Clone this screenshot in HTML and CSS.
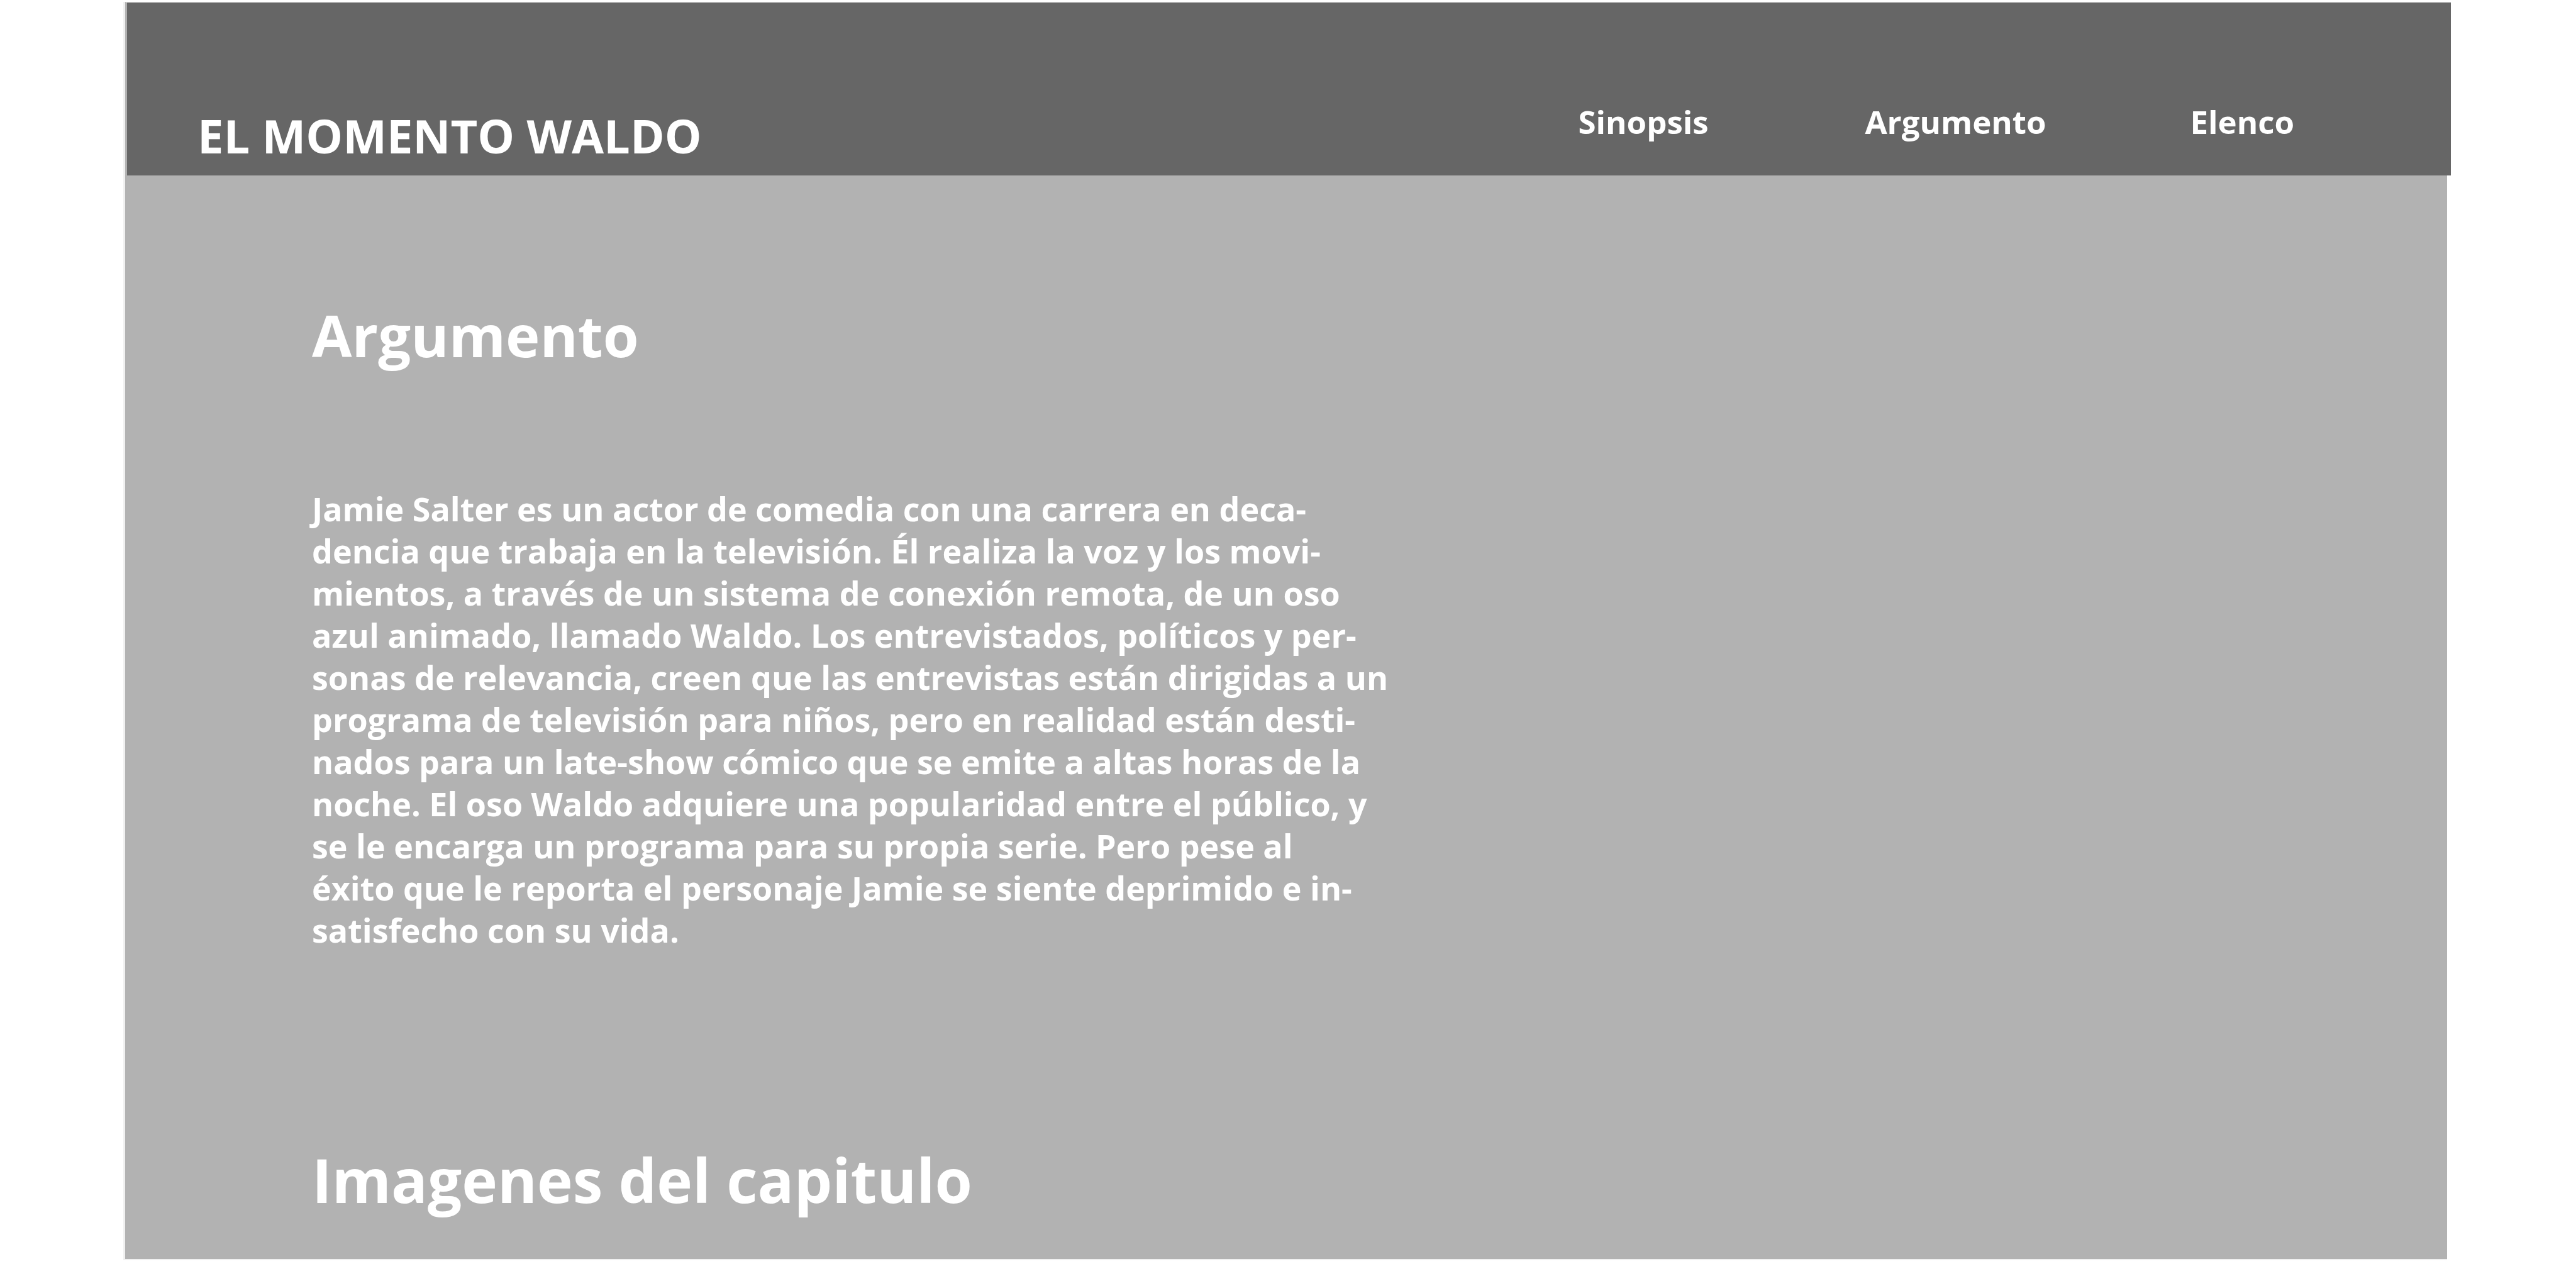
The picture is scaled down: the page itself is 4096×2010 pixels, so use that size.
FILE: index.html
```html
<!DOCTYPE html>
<html lang="es">
<head>
<meta charset="utf-8">
<title>El momento Waldo</title>
<link rel="stylesheet" href="styles.css">
</head>
<body>
<header class="site-header">
  <div class="logo">EL MOMENTO WALDO</div>
  <nav class="menu">
    <a href="#sinopsis">Sinopsis</a>
    <a href="#argumento">Argumento</a>
    <a href="#elenco">Elenco</a>
  </nav>
</header>
<main class="content">
  <h1 class="title" id="argumento">Argumento</h1>
  <p class="story">Jamie Salter es un actor de comedia con una carrera en deca-<br>
dencia que trabaja en la televisión. Él realiza la voz y los movi-<br>
mientos, a través de un sistema de conexión remota, de un oso<br>
azul animado, llamado Waldo. Los entrevistados, políticos y per-<br>
sonas de relevancia, creen que las entrevistas están dirigidas a un<br>
programa de televisión para niños, pero en realidad están desti-<br>
nados para un late-show cómico que se emite a altas horas de la<br>
noche. El oso Waldo adquiere una popularidad entre el público, y<br>
se le encarga un programa para su propia serie. Pero pese al<br>
éxito que le reporta el personaje Jamie se siente deprimido e in-<br>
satisfecho con su vida.</p>
  <h2 class="subtitle">Imagenes del capitulo</h2>
</main>
</body>
</html>
```
FILE: styles.css
```css
* {
  box-sizing: border-box;
}

body {
  display: flex;
  flex-direction: column;
  min-height: 100vh;
  margin: 0;
  padding: 3px 199px 6px 196px;
  background: #fff;
  color: #fff;
  font-family: "Open Sans", sans-serif;
  font-weight: 700;
}

.site-header {
  display: flex;
  align-items: flex-end;
  justify-content: space-between;
  padding: 156px 249px 21px 112px;
  border-top: 1px solid #f0f0f0;
  /* the page's light edge, then a strip of its grey, beside the bar */
  border-left: 3px solid #b2b2b2;
  margin-left: 3px;
  box-shadow: -3px 0 #f0f0f0;
  background: #666;
}

.logo {
  font-size: 74px;
  line-height: 84px;
}

.menu {
  display: grid;
  grid-template-columns: 456px 517px auto;
  padding-bottom: 31px;
  font-size: 51px;
  line-height: 67px;
}

.menu a {
  color: inherit;
  text-decoration: none;
}

.content {
  flex: 1;
  margin-right: 6px;
  padding: 199px 297px 70px;
  border: solid #f0f0f0;
  border-width: 0 0 2px 3px;
  background: #b2b2b2;
}

.title,
.subtitle {
  margin: 0;
  line-height: 110px;
}

.title {
  font-size: 92px;
}

.story {
  margin: 187px 0 309px;
  font-size: 52px;
  line-height: 67px;
}

.subtitle {
  font-size: 96px;
}
```
